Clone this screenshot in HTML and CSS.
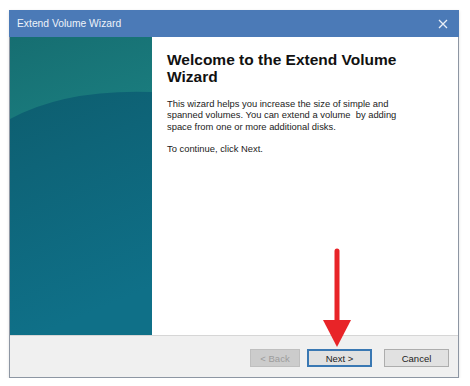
FILE: index.html
```html
<!DOCTYPE html>
<html lang="en">
<head>
    <meta charset="UTF-8">
    <title>Extend Volume Wizard</title>
    <link rel="stylesheet" href="styles.css">
</head>
<body>
    <div class="window">
        <div class="titlebar">
            <span class="title">Extend Volume Wizard</span>
            <svg class="close" width="10" height="10" viewBox="0 0 10 10">
                <path d="M1 1 L9 9 M9 1 L1 9" stroke="#e8eef7" stroke-width="1.3" fill="none"/>
            </svg>
        </div>

        <div class="main">
            <div class="side">
                <svg width="100%" height="100%" viewBox="0 0 142 298" preserveAspectRatio="none">
                    <defs>
                        <linearGradient id="lower" x1="0" y1="0" x2="0.2" y2="1">
                            <stop offset="0" stop-color="#0d5a69"/>
                            <stop offset="0.45" stop-color="#0e6478"/>
                            <stop offset="1" stop-color="#0f7088"/>
                        </linearGradient>
                        <linearGradient id="upper" x1="0" y1="0" x2="0.6" y2="1">
                            <stop offset="0" stop-color="#166e71"/>
                            <stop offset="1" stop-color="#1a7c7e"/>
                        </linearGradient>
                    </defs>
                    <rect width="142" height="298" fill="url(#lower)"/>
                    <path d="M0 0 H142 V55 Q55 52 0 82 Z" fill="url(#upper)"/>
                </svg>
            </div>
            <div class="content">
                <h1>Welcome to the Extend Volume Wizard</h1>
                <p>This wizard helps you increase the size of simple and spanned volumes. You can extend a volume &nbsp;by adding space from one or more additional disks.</p>
                <p>To continue, click Next.</p>
            </div>
        </div>

        <div class="footer">
            <button class="back" disabled>&lt; Back</button>
            <button class="next">Next &gt;</button>
            <button class="cancel">Cancel</button>
        </div>

        <!-- red pointer over the Next button -->
        <svg class="arrow" width="30" height="102" viewBox="0 0 30 102">
            <path d="M15 3 V76" stroke="#e82428" stroke-width="5" stroke-linecap="round"/>
            <path d="M1 72 H29 L15 99 Z" fill="#e82428"/>
        </svg>
    </div>
</body>
</html>
```

FILE: styles.css
```css
body {
    margin: 0;
    background-color: #fff;
    font-family: 'Liberation Sans', Arial, sans-serif;
}

.window {
    position: relative;
    width: 450px;
    margin: 10px 0 0 9px;
    box-sizing: border-box;
    border: 1px solid #8d96a3;
    border-top: none;
    box-shadow: 0 1px 3px rgba(0, 0, 0, 0.12);
}

/* タイトルバー */
.titlebar {
    height: 27px;
    margin: 0 -1px;
    padding: 0 11px 0 8px;
    background-color: #4b7ab7;
    display: flex;
    align-items: center;
    justify-content: space-between;
}

.title {
    color: #eef3fa;
    font-size: 10.3px;
}

.main {
    display: flex;
    height: 298px;
}

.side {
    width: 142px;
    flex-shrink: 0;
}

.side svg {
    display: block;
}

.content {
    flex: 1;
    background-color: #fff;
    padding: 14px 0 0 15px;
    color: #111;
}

.content h1 {
    width: 250px;
    margin: 0 0 13px;
    font-size: 15.5px;
    line-height: 17px;
    font-weight: bold;
    color: #111;
}

.content p {
    width: 242px;
    margin: 0 0 11px;
    font-size: 9.4px;
    line-height: 11.3px;
    color: #222;
}

/* 下部ボタンエリア */
.footer {
    height: 42px;
    border-top: 1px solid #d6d6d6;
    background-color: #f0f0f0;
    display: flex;
    justify-content: flex-end;
    align-items: flex-start;
    padding: 13px 9px 0 0;
    box-sizing: border-box;
}

.footer button {
    height: 18px;
    padding: 0;
    font-family: 'Liberation Sans', Arial, sans-serif;
    font-size: 9.5px;
    color: #222;
    background-color: #e1e1e1;
    border: 1px solid #adadad;
    box-sizing: border-box;
}

.back {
    width: 50px;
    color: #9c9c9c !important;
    background-color: #cccccc !important;
    border-color: #bfbfbf !important;
}

.next {
    width: 65px;
    margin-left: 7px;
    border: 2px solid #3a78b3 !important;
}

.cancel {
    width: 65px;
    margin-left: 12px;
}

.arrow {
    position: absolute;
    left: 312px;
    top: 238px;
}
```
